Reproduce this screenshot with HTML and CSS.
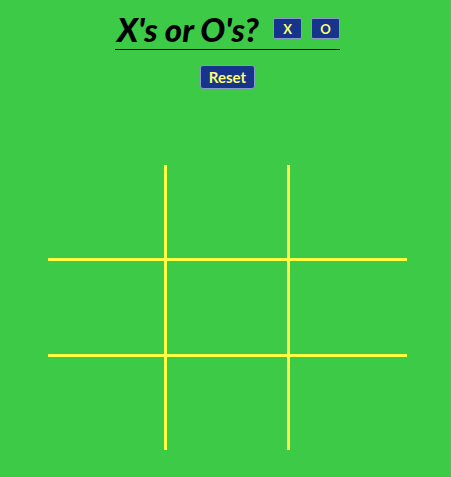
FILE: index.html
```html
<!DOCTYPE html>
<html>
<head>
<meta charset="utf-8">
<link rel="stylesheet" href="styles.css">
</head>
<body>
<div class="page">
  <header class="header">
    <div class="title-bar">
      <h1 class="title">X's or O's?</h1>
      <div class="choices">
        <button class="btn choice">X</button>
        <button class="btn choice">O</button>
      </div>
    </div>
    <button class="btn reset">Reset</button>
  </header>
  <div class="board">
    <div class="cell"></div><div class="cell"></div><div class="cell"></div>
    <div class="cell"></div><div class="cell"></div><div class="cell"></div>
    <div class="cell"></div><div class="cell"></div><div class="cell"></div>
  </div>
</div>
</body>
</html>
```
FILE: styles.css
```css
html, body {
  margin: 0;
  padding: 0;
  background: #3dcb47;
  height: 100%;
}
body {
  font-family: "Lato", "Open Sans", sans-serif;
}
.page {
  padding-left: 4px;
  display: flex;
  flex-direction: column;
  align-items: center;
}
.header {
  display: flex;
  flex-direction: column;
  align-items: center;
  padding-top: 8px;
}
.title-bar {
  display: flex;
  align-items: center;
  border-bottom: 1px solid #000;
  width: 225px;
  height: 42px;
  box-sizing: border-box;
  padding-left: 2px;
}
.title {
  margin: 0;
  font-family: "Lato", "Open Sans", sans-serif;
  font-size: 33px;
  font-weight: 900;
  font-style: italic;
  line-height: 40px;
  color: #000;
}
.choices {
  display: flex;
  gap: 9px;
  margin-left: auto;
}
.btn {
  background: #16348c;
  color: #ffff70;
  border: 1px solid #8a9ac8;
  border-radius: 2px;
  font-family: "Lato", "Open Sans", sans-serif;
  padding: 0;
  cursor: pointer;
}
.choice {
  width: 29px;
  height: 21px;
  font-size: 13px;
  font-weight: 700;
}
.reset {
  margin-top: 15px;
  width: 55px;
  height: 24px;
  font-size: 15px;
  font-weight: 700;
  border-radius: 3px;
}
.board {
  margin-top: 76px;
  width: 359px;
  height: 285px;
  display: grid;
  grid-template-columns: 116px 120px 117px;
  grid-template-rows: 93px 93px 93px;
  gap: 3px;
  background: #ffff44;
}
.cell {
  background: #3dcb47;
}
```
